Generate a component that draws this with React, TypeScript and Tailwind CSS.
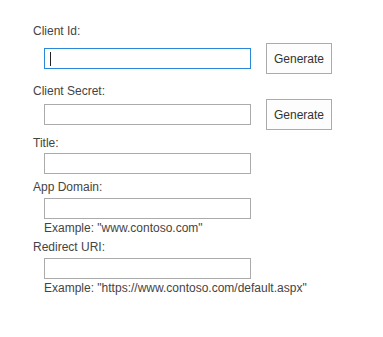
export default function App() {
  return (
    <div className="h-[337px] w-[383px] bg-white pl-[33px] pt-[23px] text-[12px] leading-[16px] text-[#444] [font-family:'Liberation_Sans',Arial,sans-serif]">
      <div>Client Id:</div>
      <div className="mt-[4px] flex items-center">
        <div className="relative ml-[11px] h-[21px] w-[207px] border border-[#2b88d8] bg-white">
          <span className="absolute left-[5px] top-[3px] h-[14px] w-px bg-[#222]" />
        </div>
        <button className="ml-[15px] h-[31px] w-[66px] border border-[#ababab] bg-[#fdfdfd] text-[#333]">Generate</button>
      </div>

      <div className="mt-[9px]">Client Secret:</div>
      <div className="flex items-center">
        <input className="ml-[11px] h-[21px] w-[207px] border border-[#ababab] bg-white outline-none" />
        <button className="ml-[15px] h-[31px] w-[66px] border border-[#ababab] bg-[#fdfdfd] text-[#333]">Generate</button>
      </div>

      <div className="mt-[5px]">Title:</div>
      <input className="ml-[11px] mt-[2px] block h-[21px] w-[207px] border border-[#ababab] bg-white outline-none" />

      <div className="mt-[5px]">App Domain:</div>
      <input className="ml-[11px] mt-[3px] block h-[21px] w-[207px] border border-[#ababab] bg-white outline-none" />
      <div className="ml-[11px] mt-[1px]">Example: "www.contoso.com"</div>

      <div className="mt-[3px]">Redirect URI:</div>
      <input className="ml-[11px] mt-[3px] block h-[21px] w-[207px] border border-[#ababab] bg-white outline-none" />
      <div className="ml-[11px] mt-[1px]">Example: "https://www.contoso.com/default.aspx"</div>
    </div>
  );
}
